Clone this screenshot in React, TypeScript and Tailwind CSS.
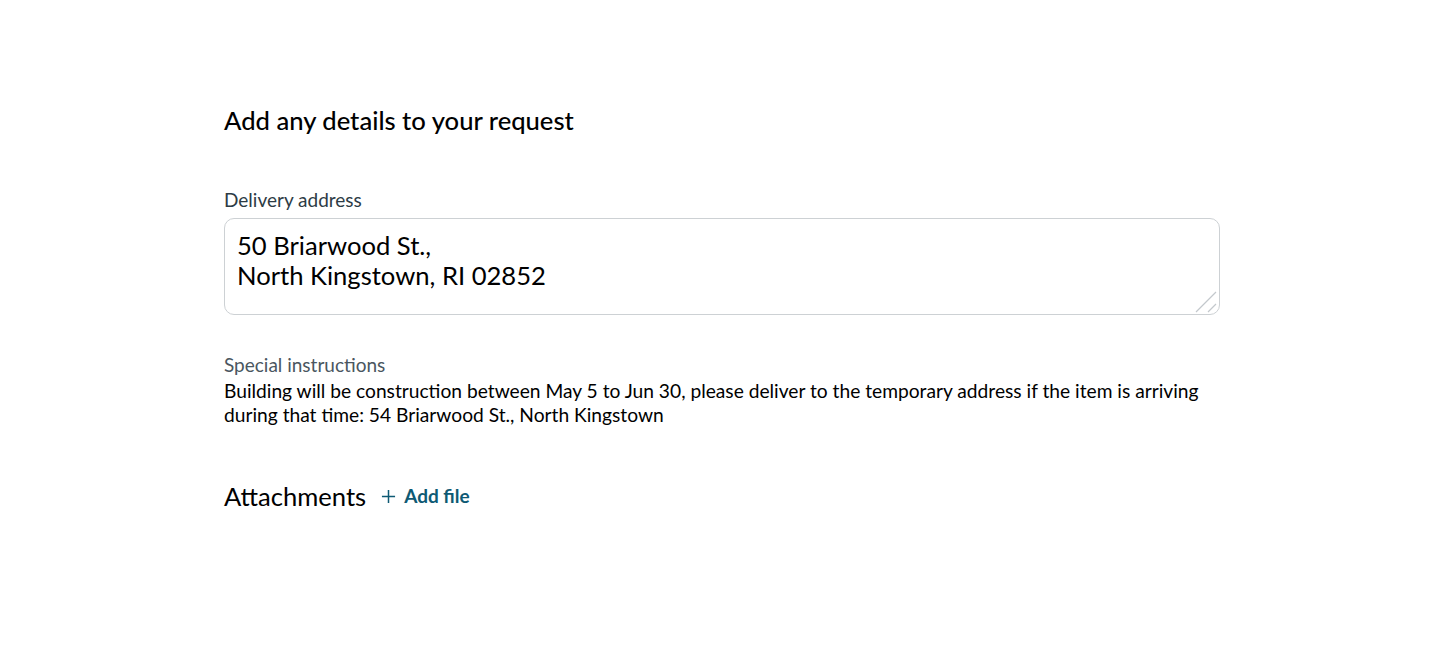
import React from "react";

const App = () => {
  return (
    <div className="min-h-screen bg-white font-['Lato',sans-serif] text-[#2d3b45]">
      <div className="w-[996px] ml-[224px] pt-[104px]">
        {/* heading */}
        <h1 className="text-[25.6px] leading-[32px] font-medium text-black">Add any details to your request</h1>

        {/* delivery address */}
        <label className="block mt-[52px] text-[19px] leading-[24px] text-[#2d3b45]">Delivery address</label>
        <div className="relative mt-[6px]">
          <textarea
            className="block w-full h-[97px] rounded-[10px] border-[1.5px] border-[#cdd1d4] px-[12px] py-[11px] text-[25.6px] leading-[30px] text-black outline-none resize-none"
            defaultValue={"50 Briarwood St.,\nNorth Kingstown, RI 02852"}
          />
          {/* resize grip */}
          <svg className="absolute right-[3px] bottom-[2px]" width="22" height="22" viewBox="0 0 22 22" fill="none" stroke="#c3c8cc" strokeWidth="1.2">
            <path d="M1 21L21 1M13 21L21 13" />
          </svg>
        </div>

        {/* special instructions */}
        <div className="mt-[38px] text-[19px] leading-[24px] text-[#4a5660]">Special instructions</div>
        <p className="mt-[2px] text-[19.2px] leading-[24px] text-black">
          Building will be construction between May 5 to Jun 30, please deliver to the temporary address if the item is arriving during that time: 54 Briarwood St., North Kingstown
        </p>

        {/* attachments */}
        <div className="mt-[53px] flex items-center gap-[15px]">
          <span className="text-[25.6px] leading-[32px] text-black">Attachments</span>
          <button className="flex items-center gap-[8px] text-[19px] font-bold text-[#0e5a74]">
            <svg width="15" height="15" viewBox="0 0 16 16" fill="none" stroke="currentColor" strokeWidth="1.6">
              <path d="M8 1v14M1 8h14" />
            </svg>
            Add file
          </button>
        </div>
      </div>
    </div>
  );
};

export default App;
